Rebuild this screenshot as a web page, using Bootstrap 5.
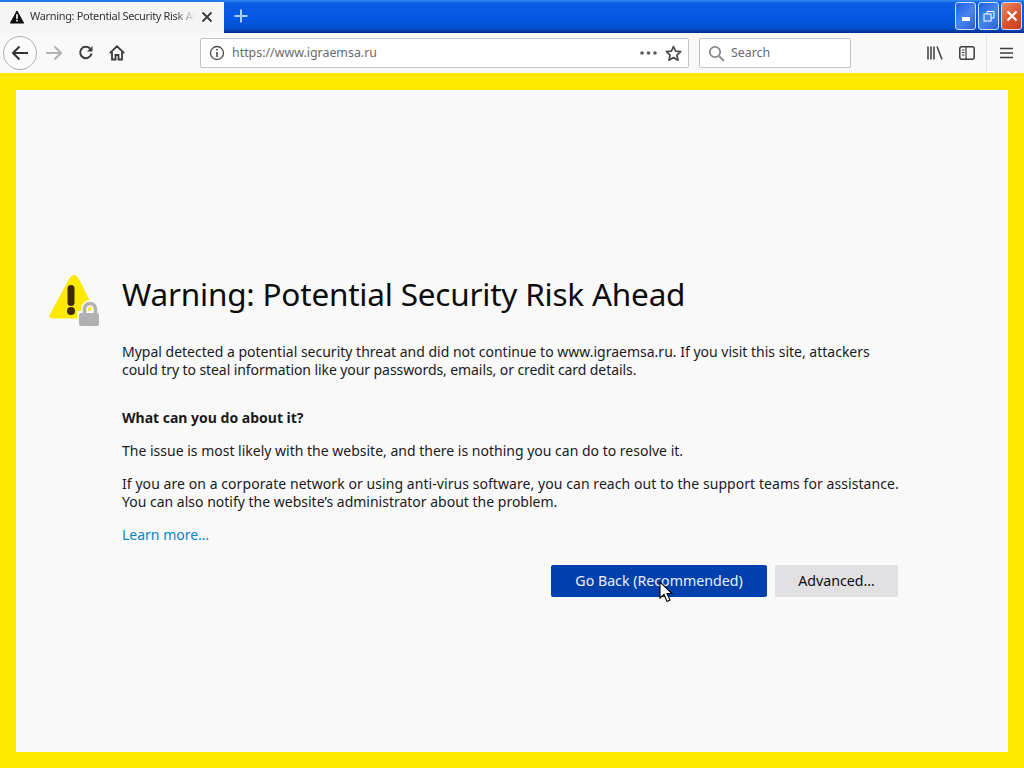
<!DOCTYPE html>
<html lang="en"><head><meta charset="utf-8"><title>Warning: Potential Security Risk Ahead</title>
<link href="https://cdn.jsdelivr.net/npm/bootstrap@5.3.0/dist/css/bootstrap.min.css" rel="stylesheet">
<style>
html,body{height:768px;overflow:hidden;margin:0}
body{font-family:"Noto Sans","Liberation Sans",sans-serif;color:#0c0c0d;background:#f9f9fa}
.titlebar{height:33px;background:linear-gradient(#3a8cf0 0,#0a5ee4 3px,#0356e2 60%,#0450d0 85%,#032f8c 100%)}
.tabbox{width:224px;height:33px;background:#f5f5f6;border-top:2px solid #1f7bea;padding:0 11px 2px 10px;font-size:11px;letter-spacing:-.33px;color:#333}
.tabtxt{width:165px;margin-left:2px;white-space:nowrap;overflow:hidden;-webkit-mask-image:linear-gradient(90deg,#000 88%,transparent);mask-image:linear-gradient(90deg,#000 88%,transparent)}
.plusbox{padding-left:9px;padding-bottom:2px}
.winset{padding:2px 2px 0 0;gap:2px}
.winbtn{width:21px;height:28px;border:1px solid #cfe0f8;border-radius:3px;background:linear-gradient(135deg,#1a5fe0,#4a85ee 50%,#2a5fd8)}
.winred{background:linear-gradient(135deg,#e98a6a,#d8502a 60%,#c84020)}
.toolbar{height:40px;background:#f9f9fa;padding-left:3px}
.backring{width:34px;height:34px;border:1px solid #b0b0b2;border-radius:50%;background:#fbfbfb}
.urlbar{height:30px;background:#fff;border:1px solid #c4c4c6;border-radius:2px;font-size:12.4px;color:#6a6a6c}
.urlmain{width:489px;margin-left:75px;padding:0 6px 0 8px}
.urltext{margin-left:7px;padding-top:1px}
.searchbox{width:152px;margin-left:10px;padding:0 8px}
.searchlabel{margin-left:6px;padding-top:1px}
.toolsep{width:1px;height:37px;background:#e4e4e6;margin-left:11px;margin-right:13px}
.framey{height:695px;background:#ffe900;padding:17px 16px 16px}
.pagearea{height:662px;background:#f9f9fa;position:relative;padding:183px 100px 0 106px}
.warnicon{position:absolute;left:32px;top:184px}
.headline{font-size:31.5px;letter-spacing:-.21px;font-weight:400;line-height:42px;margin:0 0 28px;color:#0c0c0d}
.pagearea p{font-size:14px;line-height:18px;margin:0 0 14.5px;color:#1a1a1c}
.pagearea .qhead{font-weight:700;margin:30px 0 15px}
.tightline{letter-spacing:-.08px}
.wideline{letter-spacing:.065px}
.learnlnk{font-size:14px;line-height:18px;color:#0a84c8;text-decoration:none;display:block;margin-top:15px}
.btnrow{margin-top:21px;margin-right:10px}
.gobtn,.advbtn{height:32px;font-size:14.2px;border:0;border-radius:2px;padding:0;line-height:32px}
.gobtn{width:216px;background:#0040ad;color:#e8f0ff}
.advbtn{width:123px;background:#e1e1e3;color:#0c0c0d}
.cursor{position:absolute;left:643px;top:491px}
</style></head><body>
<div class="titlebar d-flex justify-content-between">
 <div class="tabbox d-flex align-items-center">
  <svg width="14" height="14" viewBox="0 0 15 14" class="me-1"><path d="M7.500.5 14.600 13.500H.4Z" fill="#0c0c0d" stroke="#0c0c0d" stroke-linejoin="round"/><rect x="6.600" y="4" width="1.800" height="5" fill="#fff"/><rect x="6.600" y="10" width="1.800" height="1.800" fill="#fff"/></svg>
  <span class="tabtxt">Warning: Potential Security Risk Ahead</span>
  <svg width="12" height="12" viewBox="0 0 12 12" class="ms-auto"><path d="M1.500 1.500 10.500 10.500M10.500 1.500 1.500 10.500" stroke="#3a3a3c" stroke-width="1.800"/></svg>
 </div>
 <div class="plusbox flex-grow-1 d-flex align-items-center"><svg width="16" height="16" viewBox="0 0 16 16"><path d="M8 1.500V14.500M1.500 8H14.500" stroke="#a8d0ff" stroke-width="2"/></svg></div>
 <div class="winset d-flex">
  <div class="winbtn d-flex align-items-end justify-content-center pb-2"><svg width="8" height="4"><rect width="8" height="4" fill="#fff"/></svg></div>
  <div class="winbtn d-flex align-items-center justify-content-center"><svg width="12" height="12" viewBox="0 0 12 12" fill="none" stroke="#fff"><rect x="1" y="4" width="7" height="7"/><path d="M4 4V1.500H11V8H8"/></svg></div>
  <div class="winbtn winred d-flex align-items-center justify-content-center"><svg width="12" height="12" viewBox="0 0 12 12"><path d="M1.500 1.500 10.500 10.500M10.500 1.500 1.500 10.500" stroke="#fff" stroke-width="2.200"/></svg></div>
 </div>
</div>
<div class="toolbar d-flex align-items-center">
 <div class="backring d-flex align-items-center justify-content-center flex-shrink-0"><svg width="18" height="16" viewBox="0 0 18 16" fill="none" stroke="#333" stroke-width="2"><path d="M17 8H2M8.500 1.500 2 8l6.500 6.500"/></svg></div>
 <svg width="18" height="16" viewBox="0 0 18 16" fill="none" stroke="#b0b0b2" stroke-width="2" class="ms-2 flex-shrink-0"><path d="M1 8H16M9.500 1.500 16 8l-6.500 6.500"/></svg>
 <svg width="16" height="16" viewBox="0 0 16 16" fill="none" stroke="#3c3c3e" stroke-width="2" style="margin-left:15px"><path d="M13.500 8.500A5.700 5.700 0 1 1 12 3.500"/><path d="M14.500 1V6.500H9" fill="#3c3c3e" stroke="none"/></svg>
 <svg width="16" height="16" viewBox="0 0 16 16" fill="none" stroke="#3c3c3e" stroke-width="1.800" style="margin-left:15px"><path d="M.8 8.200 8 1.300l7.200 6.900M3 7V14.500H6.500V10H9.500V14.500H13V7"/></svg>
 <div class="urlbar urlmain d-flex align-items-center">
  <svg width="16" height="16" viewBox="0 0 16 16" fill="none" stroke="#4a4a4c" stroke-width="1.300"><circle cx="8" cy="8" r="6.500"/><path d="M8 7V12M8 4V5.500" stroke-width="1.600"/></svg>
  <span class="urltext">https://www.igraemsa.ru</span>
  <span class="ms-auto d-flex"><svg width="17" height="4"><circle cx="2" cy="2" r="1.800" fill="#5a5a5c"/><circle cx="8.500" cy="2" r="1.800" fill="#5a5a5c"/><circle cx="15" cy="2" r="1.800" fill="#5a5a5c"/></svg></span>
  <svg width="17" height="17" viewBox="0 0 17 17" fill="none" stroke="#4a4a4c" stroke-width="1.700" class="ms-2"><path d="M8.500 1.500 10.600 6.200 15.700 6.700 11.900 10.100 13 15.200 8.500 12.600 4 15.200 5.100 10.100 1.300 6.700 6.400 6.200Z" stroke-linejoin="round"/></svg>
 </div>
 <div class="urlbar searchbox d-flex align-items-center">
  <svg width="17" height="17" viewBox="0 0 17 17" fill="none" stroke="#8a8a8c" stroke-width="1.800"><circle cx="7" cy="7" r="5.200"/><path d="M11 11 16 16"/></svg>
  <span class="searchlabel">Search</span>
 </div>
 <svg width="16" height="16" viewBox="0 0 16 16" fill="none" stroke="#3c3c3e" stroke-width="1.500" style="margin-left:76px"><path d="M1 1.500V14.500M4 1.500V14.500M7 1.500V14.500M10 1.500 15 14.500"/></svg>
 <svg width="16" height="14" viewBox="0 0 16 14" fill="none" stroke="#3c3c3e" stroke-width="1.500" style="margin-left:16px"><rect x=".8" y=".8" width="14.400" height="12.400" rx="2"/><path d="M7 1V13M3 4H5.500M3 6.500H5.500M3 9H5.500" stroke-width="1.200"/></svg>
 <span class="toolsep"></span>
 <svg width="13" height="12" viewBox="0 0 13 12" stroke="#3c3c3e" stroke-width="1.700"><path d="M0 1.500H13M0 6H13M0 10.500H13"/></svg>
</div>
<div class="framey">
 <div class="pagearea">
  <svg class="warnicon" width="54" height="52" viewBox="0 0 54 52"><path d="M22 4 2 41Q1 44 5 44H38L44 32 30 4Q26-1 22 4Z" fill="#ffe900" stroke="#ffe900" stroke-linejoin="round"/><rect x="19.500" y="11" width="7" height="21" rx="3.500" fill="#3e2800"/><circle cx="23" cy="37" r="4" fill="#3e2800"/><path d="M36.500 41V35A5.500 5.500 0 0 1 47.500 35V41" fill="none" stroke="#f9f9fa" stroke-width="7"/><rect x="29" y="37" width="26" height="18" fill="#f9f9fa"/><path d="M36.500 41V35A5.500 5.500 0 0 1 47.500 35V41" fill="none" stroke="#b1b1b3" stroke-width="3.500"/><rect x="31" y="39" width="20" height="13" rx="2" fill="#b1b1b3"/></svg>
  <h1 class="headline">Warning: Potential Security Risk Ahead</h1>
  <p>Mypal detected a potential security threat and did not continue to www.igraemsa.ru. If you visit this site, attackers<br><span class="tightline">could try to steal information like your passwords, emails, or credit card details.</span></p>
  <p class="qhead">What can you do about it?</p>
  <p>The issue is most likely with the website, and there is nothing you can do to resolve it.</p>
  <p><span class="wideline">If you are on a corporate network or using anti-virus software, you can reach out to the support teams for assistance.</span><br>You can also notify the website’s administrator about the problem.</p>
  <a class="learnlnk" href="#">Learn more…</a>
  <div class="btnrow d-flex justify-content-end gap-2">
   <button class="btn gobtn">Go Back (Recommended)</button>
   <button class="btn advbtn">Advanced…</button>
  </div>
  <svg class="cursor" width="14" height="22" viewBox="0 0 14 22"><path d="M1 1V17L5 13.500 8 20.500 11 19 8 12.500H13Z" fill="#fff" stroke="#000" stroke-width="1.100"/></svg>
 </div>
</div>
<script src="https://cdn.jsdelivr.net/npm/bootstrap@5.3.0/dist/js/bootstrap.bundle.min.js"></script>
</body></html>
